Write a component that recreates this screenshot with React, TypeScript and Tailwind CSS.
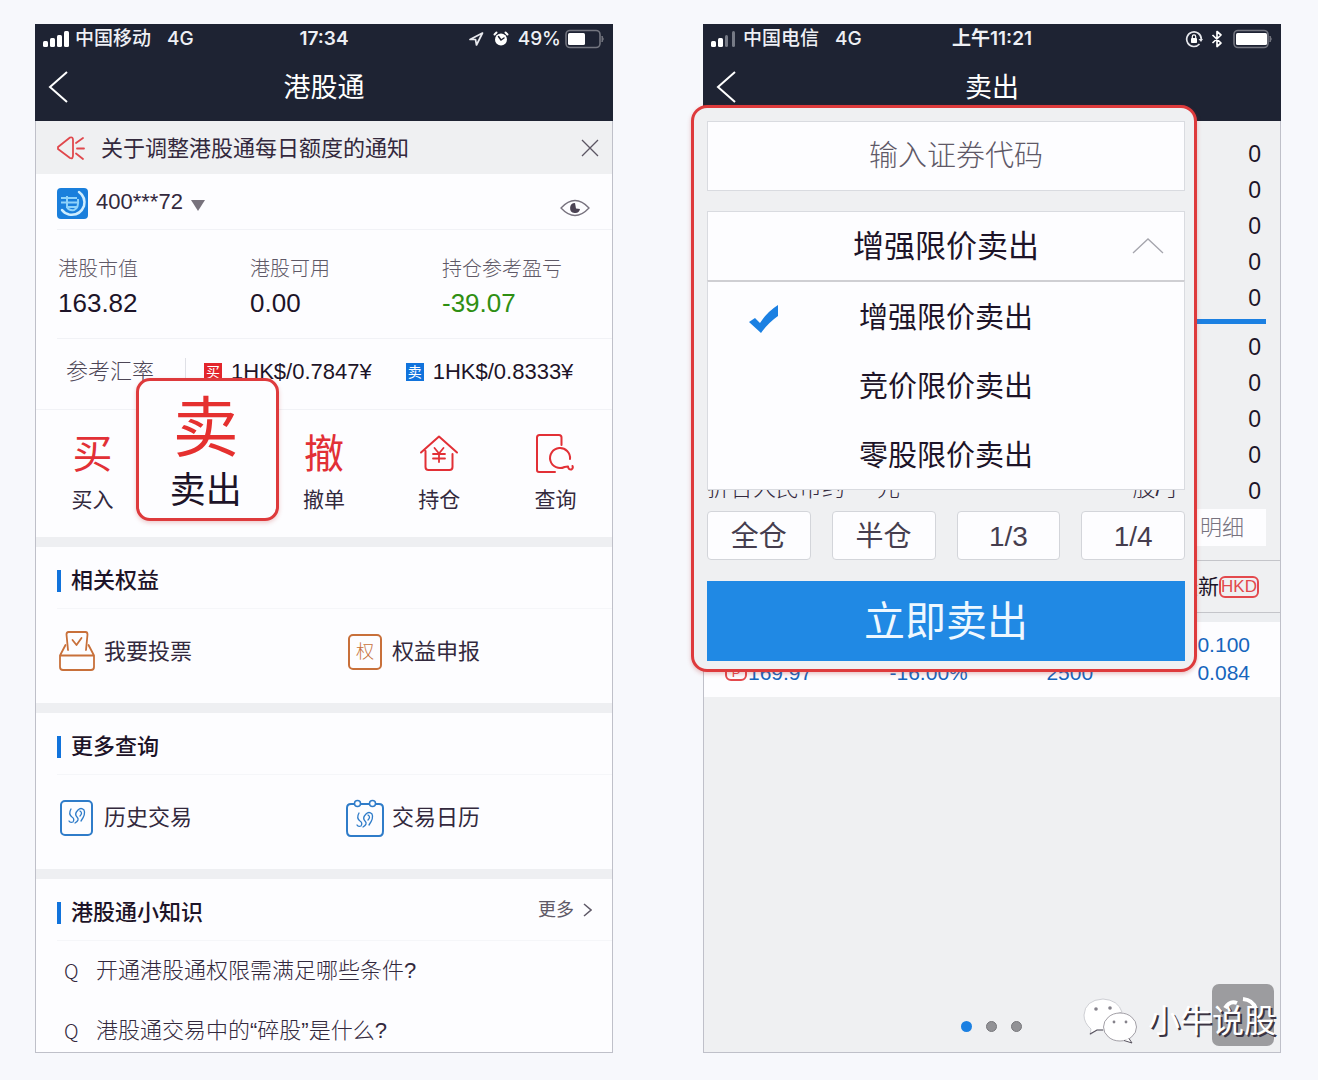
import React from "react";

const SANS = "font-['Liberation_Sans','Noto_Sans_CJK_SC',sans-serif]";
const INTER = "font-['Inter','Noto_Sans_CJK_SC',sans-serif]";

const stats = [
  { label: "港股市值", value: "163.82", tone: "text-[#1d1428]" },
  { label: "港股可用", value: "0.00", tone: "text-[#1d1428]" },
  { label: "持仓参考盈亏", value: "-39.07", tone: "text-[#2f8f12]" },
];

const questions = ["开通港股通权限需满足哪些条件?", "港股通交易中的“碎股”是什么?"];
const orderTypes = ["增强限价卖出", "竞价限价卖出", "零股限价卖出"];
const portions = ["全仓", "半仓", "1/3", "1/4"];

function Signal({ strong }: { strong: number }) {
  return (
    <svg width="27" height="18" viewBox="0 0 27 18" aria-hidden="true">
      {[6, 9, 12, 16].map((h, i) => (
        <rect key={h} x={i * 7} y={17 - h} width={i < strong ? 5 : 3} height={h} rx="1.5" fill={i < strong ? "#fff" : "#767a86"} />
      ))}
    </svg>
  );
}

function Battery({ level }: { level: number }) {
  return (
    <svg width="40" height="20" viewBox="0 0 40 20" aria-hidden="true">
      <rect x="1" y="1.5" width="34" height="17" rx="4" fill="none" stroke="#73757f" strokeWidth="1.6" />
      <path d="M37 7 Q39.5 10 37 13 Z" fill="#73757f" stroke="#73757f" />
      <rect x="3" y="4" width={level} height="12" rx="1.5" fill="#fff" />
    </svg>
  );
}

function LocationIcon() {
  return (
    <svg width="16" height="16" viewBox="0 0 16 16" fill="none" stroke="#e8e9ee" strokeWidth="1.7" strokeLinejoin="round" aria-hidden="true">
      <path d="M14.5 2 L2 8.5 L7.5 8.5 L8.5 14 Z" />
    </svg>
  );
}

function AlarmIcon() {
  return (
    <svg width="18" height="18" viewBox="0 0 18 18" fill="none" aria-hidden="true">
      <circle cx="9" cy="9.5" r="6" fill="#fff" />
      <path d="M2.5 4.5 L4.5 2.5 M15.5 4.5 L13.5 2.5" stroke="#fff" strokeWidth="2" strokeLinecap="round" />
      <path d="M6.500 6.5 L9 10 L12 8" stroke="#1f2333" strokeWidth="1.5" strokeLinecap="round" />
    </svg>
  );
}

function RotationLockIcon() {
  return (
    <svg width="18" height="18" viewBox="0 0 18 18" fill="none" aria-hidden="true">
      <path d="M14.5 14 A7.3 7.3 0 1 1 16.3 9" stroke="#e6e7ec" strokeWidth="1.7" />
      <path d="M13.5 9 H18 L16 12 Z" fill="#e6e7ec" />
      <rect x="6" y="8" width="6" height="5" rx="0.8" fill="#fff" />
      <path d="M7.3 8 V6.5 a1.7 1.7 0 0 1 3.4 0 V8" stroke="#fff" strokeWidth="1.2" />
    </svg>
  );
}

function BluetoothIcon() {
  return (
    <svg width="12" height="18" viewBox="0 0 12 18" fill="none" stroke="#fff" strokeWidth="1.7" strokeLinejoin="round" aria-hidden="true">
      <path d="M1.5 5 L10 13 L6 16.5 V1.5 L10 5 L1.5 13" />
    </svg>
  );
}

function PhoneHeader({ carrier, time, title, strong, children }: {
  carrier: string;
  time: string;
  title: string;
  strong: number;
  children: React.ReactNode;
}) {
  return (
    <header className="-mx-px h-[97px] bg-[#1e2333] text-white">
      <div className={`grid h-7 grid-cols-[1fr_auto_1fr] items-center pt-px pr-2 pl-2 text-[19px] leading-7 font-medium text-[#eef0f5] ${INTER}`}>
        <div className="flex items-center">
          <Signal strong={strong} />
          <span className="ml-[5px]">{carrier}</span>
          <span className="ml-4">4G</span>
        </div>
        <span className="font-semibold">{time}</span>
        <div className="flex items-center justify-end">{children}</div>
      </div>
      <div className="grid h-[69px] grid-cols-[60px_1fr_60px] items-center">
        <button type="button" aria-label="返回" className="pl-[13px]">
          <svg width="21" height="34" viewBox="0 0 21 34" fill="none" stroke="#fff" strokeWidth="2" aria-hidden="true">
            <path d="M19 2 L2 17 L19 32" />
          </svg>
        </button>
        <h1 className="pt-[2px] text-center text-[27px] leading-9">{title}</h1>
      </div>
    </header>
  );
}

function HornIcon() {
  return (
    <svg width="30" height="26" viewBox="0 0 30 26" fill="none" stroke="#e0484d" strokeWidth="1.8" strokeLinecap="round" strokeLinejoin="round" aria-hidden="true">
      <path d="M2 12 L14 2.5 Q17 1.5 17 5 V20 Q17 24.5 14 23 L2 14 Z" />
      <path d="M20 8 L27 3 M21 13.5 H28 M20 18.5 L27 24" />
    </svg>
  );
}

function BrokerLogo() {
  return (
    <svg width="31" height="31" viewBox="0 0 31 31" fill="none" aria-hidden="true">
      <rect width="31" height="31" rx="4" fill="#1a7fdc" />
      <path d="M22 4 Q29 9 27 18 Q23 28 12 26.5 Q7 25 5 22" stroke="#cfeeff" strokeWidth="2.5" strokeLinecap="round" />
      <path d="M4 10 H20 M4 14.5 H22 M9 19 H21 M10 8 V19 Q12 23 17 22 Q22 20 21 11" stroke="#8fd2fa" strokeWidth="2" />
    </svg>
  );
}

function EyeIcon() {
  return (
    <svg width="30" height="18" viewBox="0 0 30 18" fill="none" aria-hidden="true">
      <path d="M1 9 Q8 1.5 15 1.5 Q22 1.5 29 9 Q22 16.5 15 16.5 Q8 16.5 1 9 Z" stroke="#77727e" strokeWidth="1.3" />
      <path d="M15 4 A5 5 0 1 0 20 10 L16 9.5 Z" fill="#4b4353" />
    </svg>
  );
}

function HouseIcon() {
  return (
    <svg width="40" height="40" viewBox="0 0 40 40" fill="none" stroke="#e23036" strokeWidth="2" strokeLinecap="round" strokeLinejoin="round" aria-hidden="true">
      <path d="M2 18.5 L20 2.5 L38 18.5 M6.5 17 V33 Q6.5 36 9.5 36 H30.5 Q33.5 36 33.5 33 V20" />
      <path d="M15.5 14 L20 19.5 L24.5 14 M20 19.5 V28 M14 20 H26 M14 24.5 H26" strokeWidth="1.8" />
    </svg>
  );
}

function SearchDocIcon() {
  return (
    <svg width="40" height="40" viewBox="0 0 40 40" fill="none" stroke="#e23036" strokeWidth="2" strokeLinecap="round" strokeLinejoin="round" aria-hidden="true">
      <path d="M20 38 H4 Q2 38 2 36 V3.5 Q2 1 4.5 1 H24 Q26.5 1 26.5 3.5 V11" />
      <path d="M35 25 A10 10 0 1 0 29.5 33 L33 32.5 Q33.5 36 36.500 35.5 Q38.5 34 37.500 32" />
    </svg>
  );
}

function VoteIcon() {
  return (
    <svg width="38" height="42" viewBox="0 0 38 42" fill="none" stroke="#c8703a" strokeWidth="1.8" strokeLinejoin="round" strokeLinecap="round" aria-hidden="true">
      <path d="M10 19 L8.5 3.5 Q8.500 1 10.5 1 H27.5 Q29.500 1 29.5 3.5 L28 19" />
      <path d="M14.5 9 L18.5 14 L23.5 7" />
      <path d="M7.500 14 L2 24.5 V36 Q2 39 5 39 H33 Q36 39 36 36 V24.5 L30.5 14 M2 24.5 H36" />
    </svg>
  );
}

function Swirl() {
  return (
    <path
      d="M10 8 Q7 13 11 16 Q14 18 12 21 Q9 22 8 20 M14 22 Q19 19 16 16 Q13 13 17 9 Q20 6 23 9 Q25 13 20 20 M19 10 Q22 12 19 15"
      strokeWidth="1.3"
    />
  );
}

function HistoryIcon() {
  return (
    <svg width="38" height="38" viewBox="0 0 38 38" fill="none" stroke="#2f7cc9" strokeWidth="2" strokeLinecap="round" aria-hidden="true">
      <rect x="3" y="2" width="31" height="34" rx="4" />
      <g transform="translate(3 2)"><Swirl /></g>
    </svg>
  );
}

function CalendarIcon() {
  return (
    <svg width="38" height="38" viewBox="0 0 38 38" fill="none" stroke="#2f7cc9" strokeWidth="2" strokeLinecap="round" aria-hidden="true">
      <path d="M8 5 H5 Q1 5 1 9 V32 Q1 37 5 37 H33 Q37 37 37 32 V9 Q37 5 33 5 H30 M15 5 H23" />
      <circle cx="11.5" cy="4.5" r="3" strokeWidth="1.5" />
      <circle cx="26.5" cy="4.5" r="3" strokeWidth="1.5" />
      <g transform="translate(3 6)"><Swirl /></g>
    </svg>
  );
}

function RightsIcon() {
  return (
    <span className="mx-[2px] flex h-9 w-[34px] items-center justify-center rounded-[5px] border-2 border-[#c8703a] text-[18px] font-light text-[#c8703a]">
      权
    </span>
  );
}

function SectionTitle({ children }: { children: React.ReactNode }) {
  return (
    <h2 className="flex items-center gap-[10px] text-[22px] leading-7 font-medium text-[#1d1428]">
      <span className="h-[22px] w-1 bg-[#1173dc]" />
      {children}
    </h2>
  );
}

function LinkSection({ title, items }: { title: string; items: { label: string; icon: React.ReactNode }[] }) {
  return (
    <section className="border-b-[10px] border-[#eeeff2]">
      <div className="ml-[21px] flex h-[62px] items-center border-b border-[#f5f6f9] pt-[7px]">
        <SectionTitle>{title}</SectionTitle>
      </div>
      <div className="grid h-[94px] grid-cols-2 pb-2">
        {items.map((item) => (
          <a key={item.label} href="#" className="flex items-center gap-2 pl-[22px] text-[22px] leading-7 text-[#33293d]">
            {item.icon}
            {item.label}
          </a>
        ))}
      </div>
    </section>
  );
}

function Rate({ mark, color, text }: { mark: string; color: string; text: string }) {
  return (
    <span className="flex items-center gap-[9px]">
      <span className={`flex size-[18px] items-center justify-center text-[14px] leading-none text-white ${color}`}>{mark}</span>
      {text}
    </span>
  );
}

function HomePhone() {
  return (
    <section className="min-w-0 flex-1 border border-[#bfc0c9] bg-[#fdfdff]">
      <div className="-mt-px">
        <PhoneHeader carrier="中国移动" time="17:34" title="港股通" strong={4}>
          <LocationIcon />
          <span className="ml-2 flex"><AlarmIcon /></span>
          <span className="mr-1 ml-2">49%</span>
          <Battery level={17} />
        </PhoneHeader>
      </div>

      <div className="flex h-[53px] items-center bg-[#eff0f2] pr-3 pl-5">
        <HornIcon />
        <p className="ml-[15px] flex-1 pt-[2px] text-[22px] leading-7 text-[#33293d]">关于调整港股通每日额度的通知</p>
        <button type="button" aria-label="关闭">
          <svg width="20" height="20" viewBox="0 0 20 20" stroke="#5b5563" strokeWidth="1.3" aria-hidden="true">
            <path d="M2 2 L18 18 M18 2 L2 18" />
          </svg>
        </button>
      </div>

      <div className="ml-[21px] flex h-14 items-center border-b border-[#f1f2f6] pt-1 pr-[22px]">
        <BrokerLogo />
        <button type="button" className="ml-2 flex items-center gap-2 pb-1 text-[22px] leading-7 text-[#33293d]">
          400***72
          <svg width="14" height="11" viewBox="0 0 14 11" className="mt-2" aria-hidden="true">
            <path d="M0 0 H14 L7 11 Z" fill="#77727c" />
          </svg>
        </button>
        <button type="button" aria-label="显示金额" className="mt-2 ml-auto">
          <EyeIcon />
        </button>
      </div>

      <dl className="grid h-[108px] grid-cols-3 content-center pt-[6px]">
        {stats.map((s) => (
          <div key={s.label} className="pl-[22px]">
            <dt className="text-[20px] leading-8 font-light text-[#5f5967]">{s.label}</dt>
            <dd className={`text-[26px] leading-9 ${s.tone}`}>{s.value}</dd>
          </div>
        ))}
      </dl>
      <hr className="ml-[21px] border-[#f1f2f6]" />

      <div className="flex h-[71px] items-center border-b border-[#f1f2f6] pb-[5px] pl-[30px] text-[22px] leading-7 text-[#1d1428]">
        <span className="font-light text-[#4d4656]">参考汇率</span>
        <span className="mr-[18px] ml-[31px] h-7 w-px bg-[#dfe0e6]" />
        <Rate mark="买" color="bg-[#e3262c]" text="1HK$/0.7847¥" />
        <span className="w-[34px]" />
        <Rate mark="卖" color="bg-[#1173dc]" text="1HK$/0.8333¥" />
      </div>

      <nav className="grid h-[137px] grid-cols-5 border-b-[10px] border-[#eeeff2] text-[21px] leading-7 text-[#33293d]">
        <a href="#" className="flex flex-col items-center gap-3 pt-6 pr-[2px]">
          <span className="h-10 text-[40px] leading-10 text-[#e23036]">买</span>买入
        </a>
        <div className="relative">
          {/* enlarged callout over the sell entry */}
          <a href="#" className="absolute -top-8 -right-[13px] -left-[15px] flex h-[143px] flex-col items-center rounded-[14px] border-[3px] border-[#de3a3c] bg-[#fdfdff] pt-[15px] pr-1 shadow-[0_2px_4px_rgba(190,60,60,0.25)]">
            <span className="text-[66px] leading-[64px] text-[#e5302f]">卖</span>
            <span className="mt-[9px] text-[36px] leading-[44px] text-[#1d1428]">卖出</span>
          </a>
        </div>
        <a href="#" className="flex flex-col items-center gap-3 pt-6">
          <span className="h-10 text-[40px] leading-10 text-[#e23036]">撤</span>撤单
        </a>
        <a href="#" className="flex flex-col items-center gap-3 pt-6">
          <HouseIcon />持仓
        </a>
        <a href="#" className="flex flex-col items-center gap-3 pt-6 pl-[2px]">
          <SearchDocIcon />查询
        </a>
      </nav>

      <LinkSection title="相关权益" items={[{ label: "我要投票", icon: <VoteIcon /> }, { label: "权益申报", icon: <RightsIcon /> }]} />
      <LinkSection title="更多查询" items={[{ label: "历史交易", icon: <HistoryIcon /> }, { label: "交易日历", icon: <CalendarIcon /> }]} />

      <section>
        <div className="ml-[21px] flex h-[62px] items-center justify-between border-b border-[#f5f6f9] pt-[7px] pr-5">
          <SectionTitle>港股通小知识</SectionTitle>
          <a href="#" className="flex items-center gap-[9px] pb-[6px] text-[18px] leading-7 text-[#5f5967]">
            更多
            <svg width="9" height="14" viewBox="0 0 9 14" fill="none" stroke="#5f5967" strokeWidth="1.5" aria-hidden="true">
              <path d="M1 1 L8 7 L1 13" />
            </svg>
          </a>
        </div>
        <ul className="flex flex-col gap-8 pt-4 pl-7">
          {questions.map((q) => (
            <li key={q} className="flex text-[22px] leading-7 font-light text-[#33293d]">
              <span className="w-8 font-['Noto_Sans_CJK_SC'] text-[20px]">Q</span>
              <a href="#">{q}</a>
            </li>
          ))}
        </ul>
      </section>
    </section>
  );
}

function OrderForm() {
  return (
    <form
      onSubmit={(e) => e.preventDefault()}
      className="absolute top-[80px] right-[83px] -left-[13px] rounded-2xl border-[3px] border-[#de3a3c] bg-[#eff0f2] pt-[13px] pr-[9px] pb-2 pl-[13px] shadow-[0_2px_4px_rgba(190,60,60,0.3)]"
    >
      <input
        type="text"
        aria-label="证券代码"
        placeholder="输入证券代码"
        className="block h-[70px] w-full border border-[#d9dbe0] bg-[#fdfdff] pl-5 text-center text-[29px] font-light placeholder:text-[#5f5967]"
      />
      <div className="relative mt-5">
        <button type="button" aria-haspopup="listbox" aria-expanded="true" className="flex h-[70px] w-full items-center border border-[#d9dbe0] bg-[#fdfdff] text-[31px] text-[#1d1428]">
          <span className="flex-1 pt-[3px] pl-[52px] text-center">增强限价卖出</span>
          <svg width="32" height="16" viewBox="0 0 32 16" fill="none" stroke="#a5a5ad" strokeWidth="1.3" className="mr-5" aria-hidden="true">
            <path d="M1 15 L16 1 L31 15" />
          </svg>
        </button>
        <ul role="listbox" aria-label="委托类型" className="absolute inset-x-0 top-full -mt-px border border-t-2 border-[#d9dbe0] border-t-[#cfcfd3] bg-[#fdfdff]">
          {orderTypes.map((type, i) => (
            <li key={type} role="option" aria-selected={i === 0} className="relative flex h-[69px] items-center justify-center pt-1 text-[29px] text-[#1d1428]">
              {i === 0 && (
                <svg width="32" height="30" viewBox="0 0 32 30" className="absolute top-[22px] left-10" aria-hidden="true">
                  <path d="M1 18 L7 14 L12 19 Q19 8 30 1 L30 12 Q20 19 13 29 Z" fill="#1b80e2" />
                </svg>
              )}
              {type}
            </li>
          ))}
        </ul>
      </div>
      <div className="mt-[193px] flex h-7 items-center text-[23px] font-light text-[#33293d]">
        <span>折合人民币约</span>
        <span className="ml-8">元</span>
        <span className="ml-auto">股/手</span>
      </div>
      <div className="mt-[9px] grid grid-cols-4 gap-[21px]">
        {portions.map((p) => (
          <button key={p} type="button" className="h-[49px] rounded-[4px] border border-[#d3d5da] bg-[#fdfdff] pt-[2px] text-[28px] text-[#453d4e]">
            {p}
          </button>
        ))}
      </div>
      <button type="submit" className="mt-[21px] block h-20 w-full bg-[#2089e4] pt-1 text-[41px] text-[#eef8ff]">
        立即卖出
      </button>
    </form>
  );
}

function Watermark() {
  return (
    <div className="absolute right-1 bottom-[6px] flex h-[62px] items-center pt-3">
      <div className="absolute top-0 right-[2px] -z-10 size-[62px] rounded-[7px] bg-[#9c9c9f]">
        <svg width="62" height="62" viewBox="0 0 62 62" aria-hidden="true">
          <path d="M13 24 Q18 16 25 19 M31 15 Q41 16 44 25" fill="none" stroke="#fff" strokeWidth="4" />
        </svg>
      </div>
      <svg width="56" height="50" viewBox="0 0 56 50" aria-hidden="true">
        <path d="M9 33 Q2 27 2 19 Q3 4 21 3 Q36 4 40 16 Q26 19 22 34 L15 34 L8 39 Z" fill="#fff" stroke="#c3c4ca" strokeWidth="0.8" />
        <path d="M8 38 L15 34 L21 34" fill="none" stroke="#57525e" strokeWidth="1.2" />
        <ellipse cx="38" cy="31" rx="16.500" ry="14" fill="#fff" stroke="#8b8891" strokeWidth="0.8" />
        <path d="M42 44.5 L50 47 L47 42.5" fill="#fff" stroke="#57525e" strokeWidth="1" />
        <circle cx="14" cy="13" r="1.800" fill="#85828b" />
        <circle cx="28" cy="12" r="1.800" fill="#85828b" />
        <circle cx="32" cy="26" r="1.400" fill="#85828b" />
        <circle cx="44" cy="26" r="1.400" fill="#85828b" />
      </svg>
      <span className="ml-[10px] text-[32px] leading-10 text-white [text-shadow:2px_2px_0_#3b3442]">小牛说股</span>
    </div>
  );
}

function SellPhone() {
  return (
    <section className="relative flex min-w-0 flex-1 flex-col border border-[#bfc0c9] bg-[#eff0f2]">
      <div className="-mt-px">
        <PhoneHeader carrier="中国电信" time="上午11:21" title="卖出" strong={2}>
          <RotationLockIcon />
          <span className="mr-[10px] ml-2"><BluetoothIcon /></span>
          <Battery level={31} />
        </PhoneHeader>
      </div>

      <div className="flex h-[440px] flex-col items-end border-b border-[#c4c5ca] pt-[15px] pr-[14px] text-[23px] leading-9 text-[#1d1428]">
        {[0, 1, 2, 3, 4].map((i) => (
          <span key={i} className="pr-[5px]">0</span>
        ))}
        <span className="mt-[3px] mb-[5px] h-[5px] w-[120px] shrink-0 bg-[#1b80e2]" />
        {[0, 1, 2, 3, 4].map((i) => (
          <span key={i} className="pr-[5px]">0</span>
        ))}
        <button type="button" className="h-[37px] w-[120px] shrink-0 bg-[#fdfdff] pr-[22px] text-right text-[22px] font-light text-[#77727e]">明细</button>
      </div>

      <table className="w-full table-fixed text-[21px] leading-7 text-[#1565bd]">
        <thead>
          <tr className="h-[51px] border-b border-[#c4c5ca] text-[#1d1428]">
            <td className="w-[28%]" />
            <td className="w-[22%]" />
            <td className="w-[27%]" />
            <th scope="col" className="pt-[2px] pr-[21px] font-normal">
              <span className="flex items-center justify-end">
                最新
                <span className="rounded-[6px] border-2 border-[#e3494d] text-[17px] leading-[18px] text-[#e3494d]">HKD</span>
              </span>
            </th>
          </tr>
        </thead>
        <tbody className="bg-[#fdfdff]">
          <tr className="h-[10px] bg-[#eceef1]">
            <td colSpan={4} />
          </tr>
          <tr className="h-[37px] align-bottom">
            <td colSpan={3} />
            <td className="pr-[30px] text-right">0.100</td>
          </tr>
          <tr className="h-[38px] align-top">
            <td>
              <span className="flex items-center pl-[21px]">
                <span className="mr-px flex h-4 w-[22px] items-center justify-center rounded-[6px] border-2 border-[#e3494d] text-[13px] text-[#e3494d]">P</span>
                169.97
              </span>
            </td>
            <td className="text-center">-16.00%</td>
            <td className="text-center">2500</td>
            <td className="pr-[30px] text-right">0.084</td>
          </tr>
        </tbody>
      </table>

      <div className="mt-auto flex justify-center gap-[14px] pr-[2px] pb-5">
        <span className="size-[11px] rounded-full bg-[#1b80e2]" />
        <span className="size-[11px] rounded-full border border-[#77777b] bg-[#929296]" />
        <span className="size-[11px] rounded-full border border-[#77777b] bg-[#929296]" />
      </div>

      <OrderForm />
      <div className="isolate">
        <Watermark />
      </div>
    </section>
  );
}

export default function App() {
  return (
    <main lang="zh-CN" className={`flex min-h-screen gap-[90px] bg-[#f7f8fc] pt-6 pr-[37px] pb-[27px] pl-[35px] ${SANS}`}>
      <HomePhone />
      <SellPhone />
    </main>
  );
}
